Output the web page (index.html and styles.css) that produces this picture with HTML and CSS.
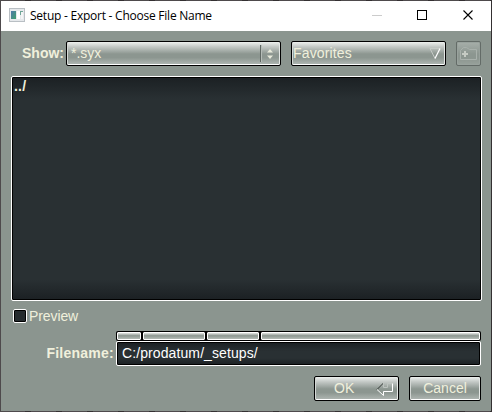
FILE: index.html
```html
<!DOCTYPE html>
<html lang="en">
<head>
<meta charset="utf-8">
<title>Setup - Export - Choose File Name</title>
<link rel="stylesheet" href="styles.css">
</head>
<body>
<div class="window">
  <header class="titlebar">
    <svg class="app-icon" width="16" height="14" viewBox="0 0 16 14">
      <defs><linearGradient id="g" x1="0" y1="0" x2="1" y2="1"><stop offset="0" stop-color="#4f78aa"/><stop offset="1" stop-color="#3da06c"/></linearGradient></defs>
      <rect x=".5" y=".5" width="15" height="13" fill="#e6e9ec" stroke="#b9bfc4"/>
      <rect x="2" y="3" width="5" height="8" fill="url(#g)"/>
      <rect x="8" y="3" width="3" height="8" fill="#fff"/>
      <rect x="12" y="3" width="2" height="8" fill="#f4f5f6"/>
      <path d="M11.500 3v4M12 3.500h2" stroke="#6fa597"/>
    </svg>
    <h1 class="title">Setup - Export - Choose File Name</h1>
    <svg class="controls" width="104" height="12" viewBox="0 0 104 12" fill="none">
      <path d="M0 6.5h10" stroke="#ccc"/>
      <rect x="45.5" y="1.5" width="9" height="9" stroke="#000"/>
      <path d="M91.500 1.500l9 9M100.500 1.500l-9 9" stroke="#000" stroke-width="1.1"/>
    </svg>
  </header>
  <main class="body">
    <div class="row filter">
      <label class="label">Show:</label>
      <div class="raised show"><span>*.syx</span>
        <svg width="18" height="17" viewBox="0 0 18 17"><path d="M.5 0v17" stroke="#5f6763"/><path d="M1.500 0v17" stroke="#b5bcb7"/><path d="M7 7.500l3-3.500L13 7.500zM7 10.500h6l-3 3.500z" fill="#e8eadb"/></svg>
      </div>
      <div class="raised favorites"><span>Favorites</span>
        <svg width="12" height="13" viewBox="0 0 12 13" fill="none"><path d="M11 1.500H1l5 10" stroke="#c5cac6"/><path d="M6 11.500l5-10" stroke="#fff" stroke-width="1.200"/></svg>
      </div>
      <div class="new-folder">
        <svg width="17" height="14" viewBox="0 0 17 14" fill="none"><path d="M.5 13.500V4.500l3-3h3l3 2h7v10z" stroke="#a9b1ac"/><path d="M5 5v6M2 8h6" stroke="#c5cac3" stroke-width="2"/></svg>
      </div>
    </div>
    <div class="sunken list">../</div>
    <div class="row preview"><span class="check"></span><span>Preview</span></div>
    <div class="row filename">
      <label class="label">Filename:</label>
      <div class="field">
        <div class="crumbs"><i></i><i></i><i></i><i></i></div>
        <div class="sunken input">C:/prodatum/_setups/</div>
      </div>
    </div>
    <div class="row actions">
      <div class="raised ok"><span>OK</span>
        <svg width="18" height="14" viewBox="0 0 18 14" fill="none"><path d="M7.500 1L1 7.500" stroke="#303633"/><path d="M7.500 1v4.500h4v-4h5" stroke="#bdc3bf"/><path d="M1 7.500l6.500 6v-4h9v-8" stroke="#fff"/></svg>
      </div>
      <div class="raised cancel"><span>Cancel</span></div>
    </div>
  </main>
</div>
</body>
</html>
```
FILE: styles.css
```css
* { box-sizing: border-box; }
body {
  margin: 0;
  width: 492px;
  height: 412px;
  overflow: hidden;
  padding: 1px;
  background: repeating-linear-gradient(90deg, #4e4a4c 0 25px, #343032 25px 31px);
  font: 14px/16px "Liberation Sans", Arial, sans-serif;
  color: #f0f0dc;
}
.window { height: 410px; background: #8b958f; }
.titlebar {
  display: flex;
  align-items: center;
  height: 30px;
  padding: 0 15px 0 8px;
  background: #fff;
  color: #000;
}
.app-icon { margin-top: -2px; }
.title {
  margin: 0 0 0 5px;
  font: 12px/16px "Open Sans", "Noto Sans", sans-serif;
  letter-spacing: -0.24px;
  white-space: nowrap;
}
.controls { margin-left: auto; margin-top: -2px; }
.body { padding: 10px 9px 0 10px; }
.row { display: flex; }
.label { font-weight: bold; text-align: right; padding-right: 2px; }
.filter .label { width: 55px; padding-top: 4px; }
.raised {
  display: flex;
  align-items: center;
  height: 25px;
  border: 1px solid #000;
  border-radius: 2px;
  background: linear-gradient(#edf0ee, #c5cac7 20%, #8c9690 52%, #8c9690 68%, #b2b9b5);
  box-shadow: inset 1px 0 #d4d8d5, inset -1px 0 #e4e7e5, inset 0 -1px #fff;
}
.raised span { margin-top: -2px; }
.raised svg { flex: none; }
.show { width: 215px; padding-left: 4px; justify-content: space-between; }
.show svg { margin-right: 2px; }
.favorites { width: 155px; margin-left: 10px; padding: 0 4px 0 1px; justify-content: space-between; }
.favorites span { letter-spacing: 0.15px; }
.new-folder {
  display: flex;
  align-items: center;
  justify-content: center;
  width: 25px;
  height: 25px;
  margin-left: 10px;
  border: 1px solid #636b67;
  border-radius: 2px;
  background: linear-gradient(#a7afaa, #8c9690 52%, #8c9690 70%, #98a19b);
  box-shadow: inset 0 0 0 1px #99a29d;
}
.new-folder svg { margin-top: -2px; }
.sunken {
  border: 1px solid #fff;
  border-radius: 2px;
  box-shadow: inset 0 0 0 1px #000;
}
.list {
  height: 225px;
  margin-top: 10px;
  padding: 1px 2px;
  font-weight: bold;
  letter-spacing: 0.2px;
  background: linear-gradient(#1b2023, #293033 22px, #293033 203px, #1b2023);
}
.preview { margin-top: 7px; padding: 0 0 0 2px; align-items: center; gap: 2px; height: 16px; }
.check {
  width: 14px;
  height: 14px;
  border: 1px solid #fff;
  border-radius: 2px;
  background: #252b2e;
  box-shadow: inset 0 0 0 1px #000;
}
.preview span + span { letter-spacing: -0.1px; }
.filename { margin-top: 7px; }
.filename .label { width: 105px; padding-top: 14px; letter-spacing: 0.25px; }
.field { width: 365px; }
.crumbs {
  display: grid;
  grid-template-columns: 24px 62px 52px 219px;
  gap: 2px;
  height: 10px;
  padding: 1px;
  background: #000;
  border-radius: 2px;
}
.crumbs i {
  border: 1px solid #fff;
  border-radius: 1px;
  background: linear-gradient(#e4e7e5, #8c9690 45%, #b5bcb7);
}
.input {
  height: 25px;
  padding: 3px 5px;
  color: #fff;
  letter-spacing: 0.1px;
  background: linear-gradient(#1b2023, #293033 40%, #293033 70%, #1b2023);
}
.actions { margin: 10px 1px 0 0; justify-content: flex-end; gap: 10px; }
.ok { width: 85px; padding: 0 4px 0 19px; justify-content: space-between; }
.cancel { width: 72px; justify-content: center; }
```
